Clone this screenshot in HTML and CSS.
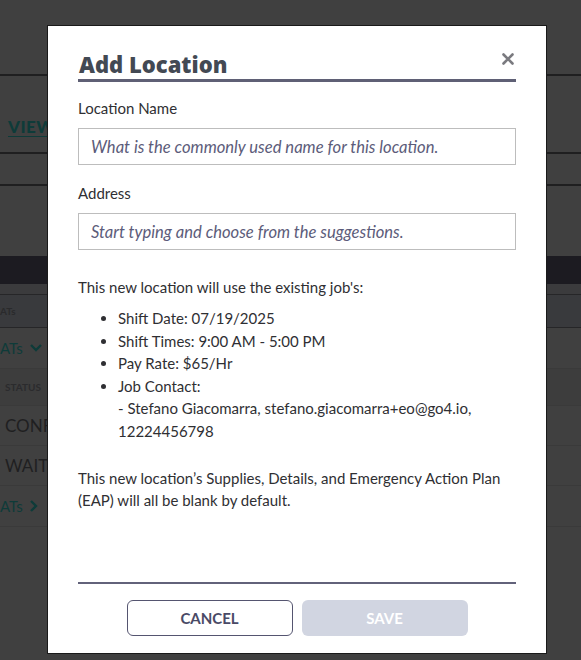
FILE: index.html
```html
<!DOCTYPE html>
<html lang="en">
<head>
    <meta charset="UTF-8">
    <meta name="viewport" content="width=device-width, initial-scale=1.0">
    <title>Add Location</title>
    <link rel="stylesheet" href="styles.css">
</head>
<body>
    <div class="page">
        <div class="strip strip-top"></div>
        <div class="strip strip-view"><a class="view-link">VIEW</a></div>
        <div class="strip strip-thin"></div>
        <div class="strip strip-gap"></div>
        <div class="band"></div>
        <div class="band-under"></div>
        <div class="row row-head">ATs</div>
        <div class="row row-toggle">ATs
            <svg width="14" height="10" viewBox="0 0 14 10"><path d="M2 2 L7 7 L12 2" fill="none" stroke="#0e3b39" stroke-width="2.4"/></svg>
        </div>
        <div class="row row-status">STATUS</div>
        <div class="row row-name">CONFIRMED</div>
        <div class="row row-name">WAITLISTED</div>
        <div class="row row-toggle">ATs
            <svg width="10" height="14" viewBox="0 0 10 14"><path d="M2 2 L7 7 L2 12" fill="none" stroke="#0e3b39" stroke-width="2.4"/></svg>
        </div>
    </div>

    <div class="modal">
        <div class="modal-head">
            <h2 class="modal-title">Add Location</h2>
            <button class="close-btn" aria-label="Close">
                <svg width="12" height="12" viewBox="0 0 12 12">
                    <path d="M1.5 1.5 L10.5 10.5 M10.5 1.5 L1.5 10.5" stroke="#7a7a7f" stroke-width="2.6" stroke-linecap="round"/>
                </svg>
            </button>
        </div>

        <div class="modal-body">
            <label class="field-label">Location Name</label>
            <input class="field-input" type="text" placeholder="What is the commonly used name for this location.">

            <label class="field-label">Address</label>
            <input class="field-input" type="text" placeholder="Start typing and choose from the suggestions.">

            <p class="intro">This new location will use the existing job's:</p>
            <ul class="job-list">
                <li>Shift Date: 07/19/2025</li>
                <li>Shift Times: 9:00 AM - 5:00 PM</li>
                <li>Pay Rate: $65/Hr</li>
                <li>Job Contact:<br>- Stefano Giacomarra, stefano.giacomarra+eo@go4.io, 12224456798</li>
            </ul>
            <p class="note">This new location’s Supplies, Details, and Emergency Action Plan (EAP) will all be blank by default.</p>
        </div>

        <div class="modal-foot">
            <button class="btn btn-cancel">Cancel</button>
            <button class="btn btn-save" disabled>Save</button>
        </div>
    </div>
</body>
</html>
```

FILE: styles.css
```css
body {
    margin: 0;
    font-family: 'Lato', 'Liberation Sans', sans-serif;
    background-color: #404040;
    height: 660px;
    overflow: hidden;
}

.page {
    display: flex;
    flex-direction: column;
}

.strip {
    border-bottom: 2px solid #1f1f20;
}

.strip-top {
    height: 74px;
}

.strip-view {
    height: 78px;
    display: flex;
    align-items: flex-end;
    padding-left: 8px;
    box-sizing: border-box;
}

.view-link {
    color: #0e3b39;
    font-weight: 900;
    font-size: 17px;
    letter-spacing: 0.5px;
    text-decoration: underline;
    text-underline-offset: 3px;
    margin-bottom: 15px;
}

.strip-thin {
    height: 30px;
}

.strip-gap {
    height: 70px;
    border-bottom: none;
}

.band {
    height: 28px;
    background-color: #1c1b21;
}

.band-under {
    height: 10px;
    background-color: #3b3b3d;
    border-bottom: 1px solid #262628;
}

.row {
    display: flex;
    align-items: center;
    border-bottom: 1px solid #3a3a3a;
}

.row-head {
    height: 32px;
    background-color: #393a3d;
    border-bottom: 1px solid #262628;
    font-size: 10px;
    font-weight: 700;
    color: #2a2a2c;
}

.row-toggle {
    height: 40px;
    color: #0e3b39;
    font-size: 15px;
    gap: 6px;
}

.row-status {
    height: 36px;
    font-size: 10px;
    font-weight: 700;
    color: #2b2b2d;
    padding-left: 5px;
    background-color: #3d3d3d;
}

.row-name {
    height: 39px;
    font-size: 17px;
    color: #1f1f21;
    padding-left: 5px;
}

.modal {
    position: absolute;
    left: 47px;
    top: 25px;
    width: 500px;
    height: 629px;
    box-sizing: border-box;
    background-color: #fff;
    border: 1px solid #1a1a1a;
    padding: 0 30px;
    display: flex;
    flex-direction: column;
}

.modal-head {
    display: flex;
    justify-content: space-between;
    align-items: flex-start;
    padding-top: 23px;
    border-bottom: 3px solid #5f6075;
}

.modal-title {
    margin: 0;
    font-family: 'Open Sans', 'DejaVu Sans', sans-serif;
    font-weight: 800;
    font-size: 22px;
    line-height: 30px;
    color: #434953;
    padding-left: 1px;
}

.close-btn {
    background: none;
    border: none;
    padding: 0;
    margin-top: 4px;
    margin-right: 1px;
    cursor: pointer;
    width: 14px;
    height: 14px;
}

.modal-body {
    flex: 1;
    display: flex;
    flex-direction: column;
    padding-top: 16px;
    color: #2f2f33;
    font-size: 15px;
}

.field-label {
    line-height: 20px;
    margin-bottom: 10px;
}

.field-input {
    height: 37px;
    box-sizing: border-box;
    border: 1px solid #bdbdbd;
    padding: 0 12px;
    font-family: 'Lato', 'Liberation Sans', sans-serif;
    font-size: 16.6px;
    margin-bottom: 18px;
}

.field-input::placeholder {
    color: #5c5c7a;
    font-style: italic;
}

.intro {
    margin: 8px 0 9px;
    line-height: 22px;
}

.job-list {
    margin: 0 0 25px;
    padding-left: 40px;
    line-height: 22.5px;
}

.note {
    margin: 0;
    line-height: 22px;
}

.modal-foot {
    border-top: 2px solid #62627a;
    display: flex;
    justify-content: center;
    gap: 9px;
    padding: 16px 0 17px;
}

.btn {
    width: 166px;
    height: 36px;
    border-radius: 6px;
    font-family: 'Lato', 'Liberation Sans', sans-serif;
    font-size: 15px;
    font-weight: 700;
    text-transform: uppercase;
    cursor: pointer;
}

.btn-cancel {
    background-color: #fff;
    border: 1px solid #555570;
    color: #4a4a66;
}

.btn-save {
    background-color: #d1d5e1;
    border: none;
    color: #fff;
}
```
